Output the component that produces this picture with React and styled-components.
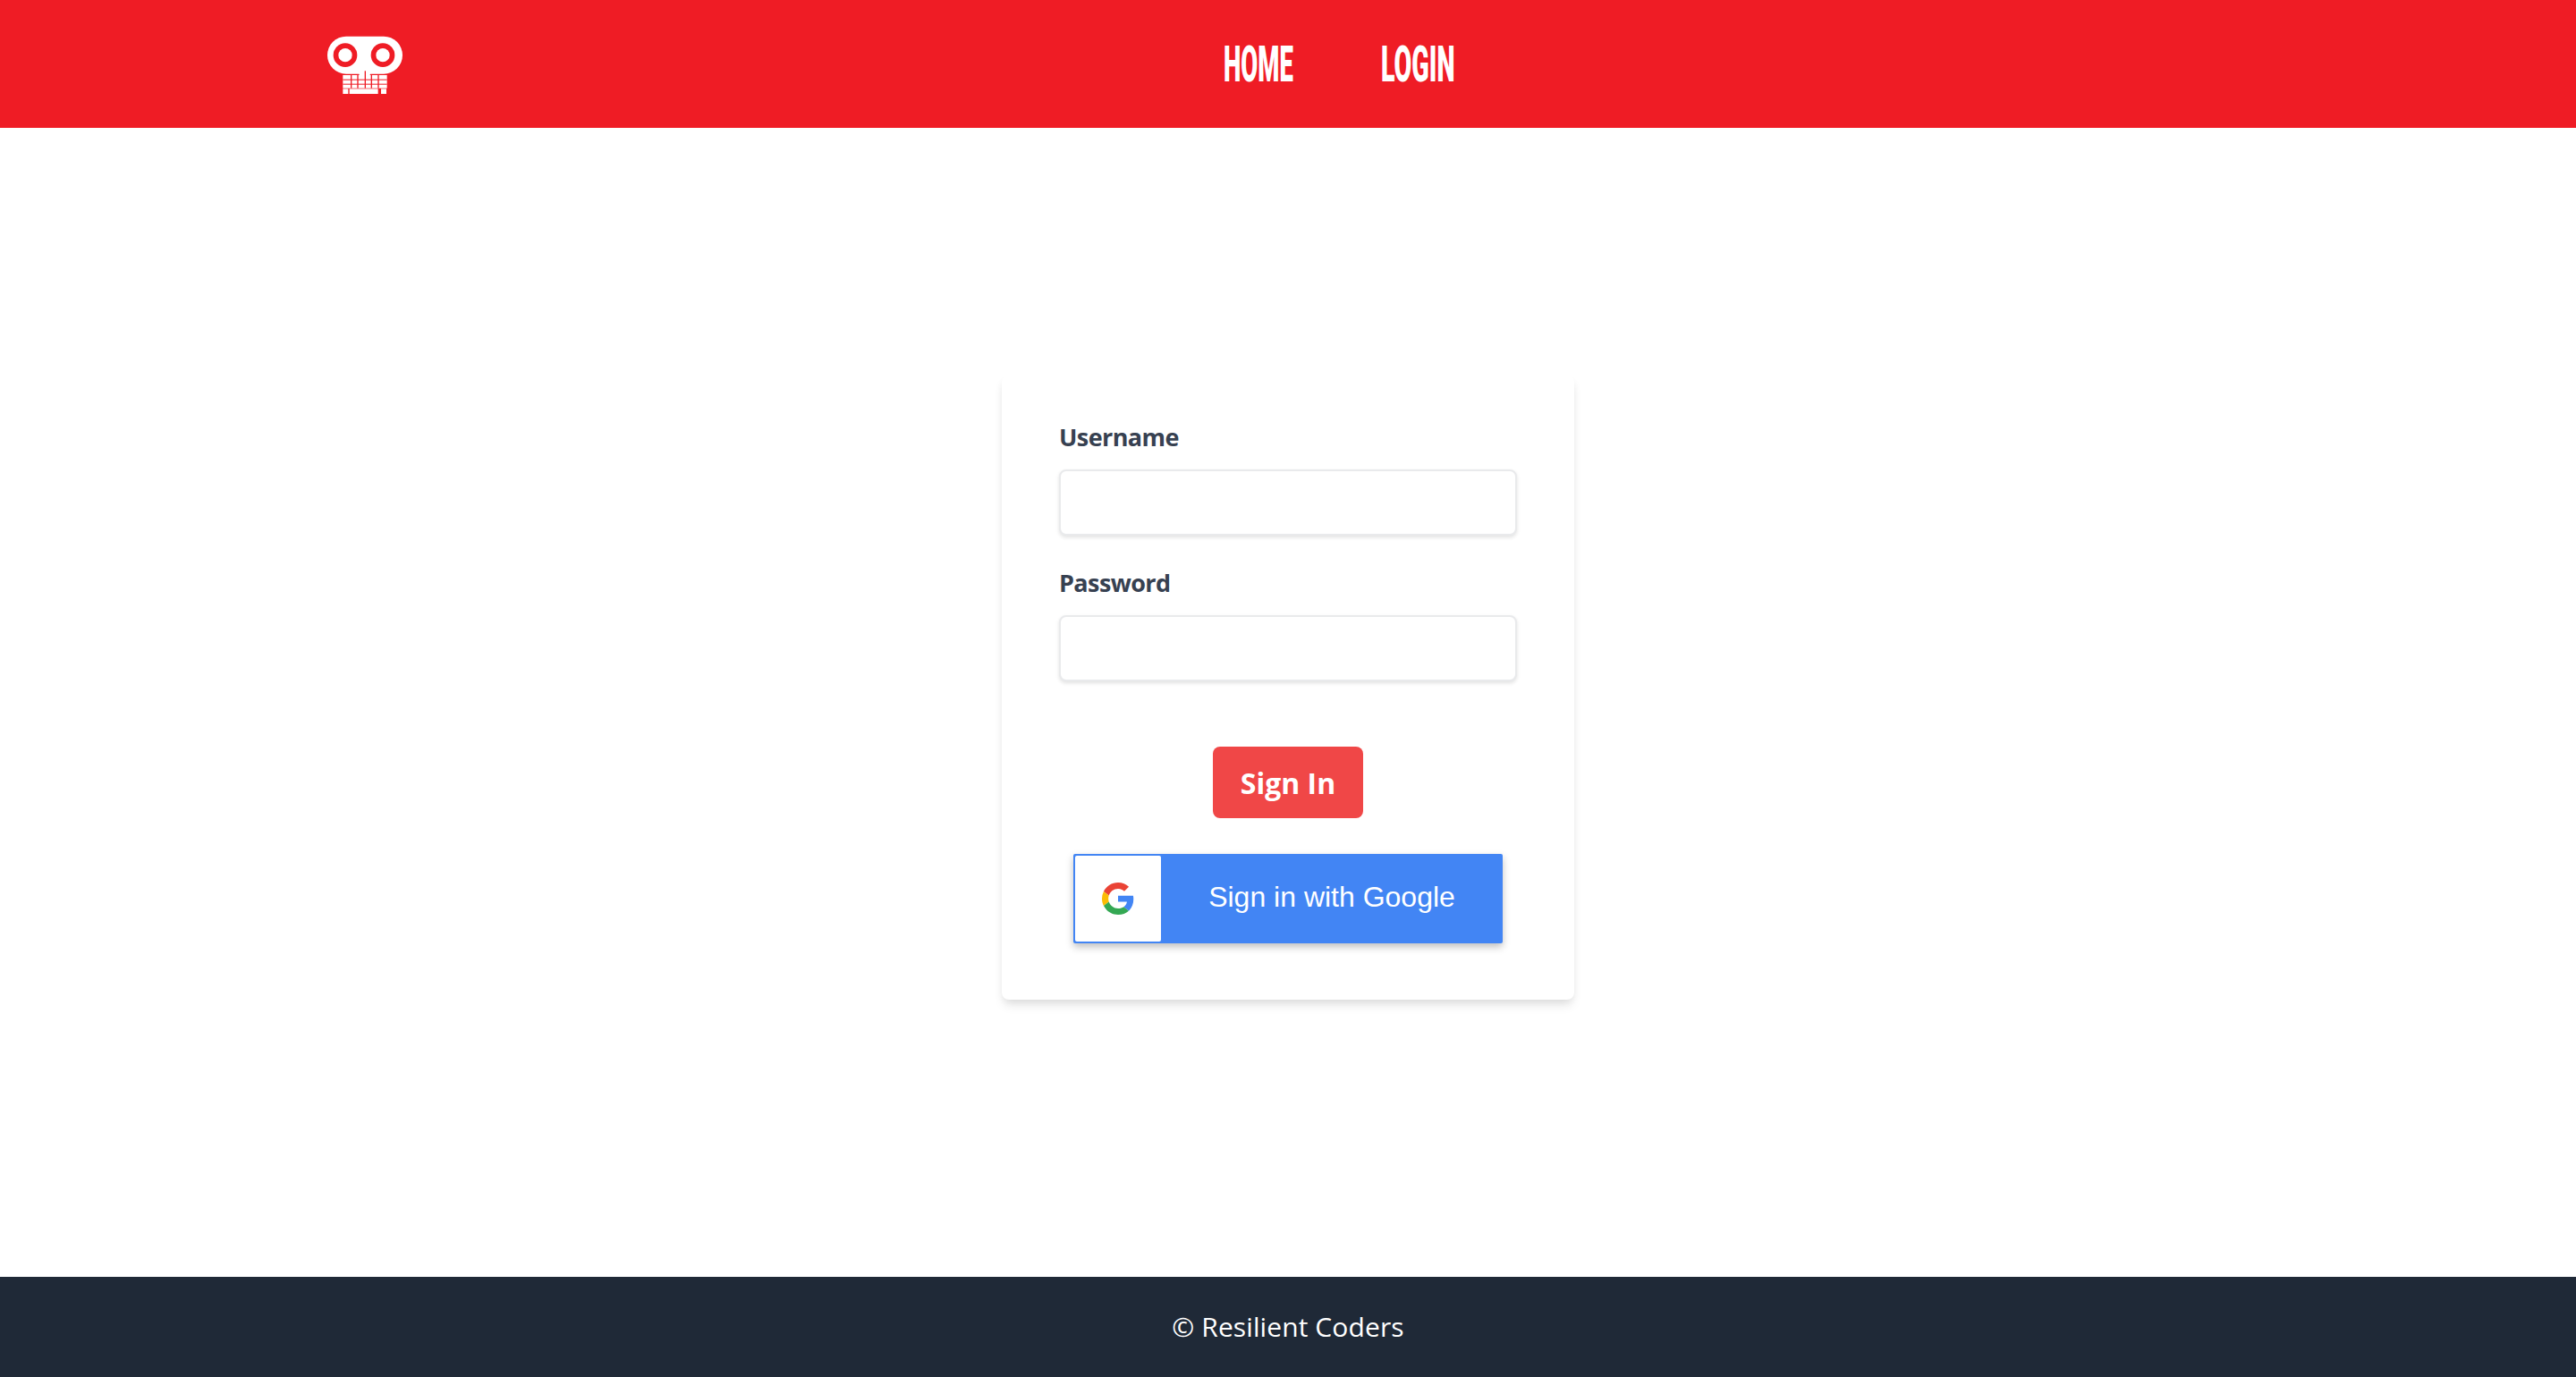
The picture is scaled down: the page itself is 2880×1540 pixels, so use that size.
import React from 'react'
import styled, { createGlobalStyle } from 'styled-components'

const GlobalStyle = createGlobalStyle`
  * { box-sizing: border-box; }
  body { margin: 0; background: #fff; font-family: "Open Sans", "Noto Sans", sans-serif; }
`

const Page = styled.div`
  display: flex;
  flex-direction: column;
  min-height: 1540px;
`
const Header = styled.header`
  display: flex;
  align-items: center;
  height: 143px;
  padding-left: 365px;
  background: #ef1c25;
`
const Logo = styled.svg`
  width: 87px;
  height: 67px;
  margin-top: 3px;
`
const Nav = styled.nav`
  display: flex;
  gap: 96px;
  margin-left: 916px;
`
const NavLink = styled.a`
  display: block;
  width: ${p => p.$w}px;
  height: 56px;
  color: #fff;
  font: 900 55px/56px Roboto, sans-serif;
  white-space: nowrap;
  transform-origin: left center;
  transform: scaleX(${p => p.$scale});
`
const Main = styled.main`
  flex: 1;
  display: flex;
  justify-content: center;
  align-items: flex-start;
  padding-top: 276px;
`
const Card = styled.form`
  display: flex;
  flex-direction: column;
  width: 640px;
  padding: 50px 64px 63px;
  background: #fff;
  border-radius: 8px;
  box-shadow: 0 8px 12px -2px rgba(0, 0, 0, .1), 0 4px 8px -2px rgba(0, 0, 0, .06);
`
const Label = styled.label`
  display: block;
  margin-bottom: 16px;
  color: #374151;
  font-size: 27px;
  font-weight: 700;
  letter-spacing: -0.6px;
  line-height: 40px;
`
const Input = styled.input`
  display: block;
  width: 100%;
  height: 74px;
  margin-bottom: ${p => p.$mb}px;
  border: 2px solid #e9eaec;
  border-radius: 8px;
  background: #fff;
  box-shadow: 0 2px 4px rgba(0, 0, 0, .12);
`
const SubmitButton = styled.button`
  align-self: center;
  width: 168px;
  height: 80px;
  padding: 2px 0 0;
  border: 0;
  border-radius: 8px;
  background: #f04747;
  color: #fff;
  font-family: inherit;
  font-size: 32px;
  font-weight: 700;
  line-height: 48px;
`
const GoogleButton = styled.div`
  display: flex;
  align-self: center;
  width: 480px;
  height: 100px;
  margin-top: 40px;
  padding: 2px;
  background: #4285f4;
  border-radius: 2px;
  box-shadow: 0 4px 8px rgba(0, 0, 0, .25);
  color: #fff;
  font: 400 32px/92px "Liberation Sans", Arial, sans-serif;
`
const GoogleIcon = styled.span`
  display: flex;
  align-items: center;
  justify-content: center;
  width: 96px;
  height: 96px;
  background: #fff;
  border-radius: 2px;
`
const GoogleLabel = styled.span`
  flex: 1;
  padding-left: 2px;
  text-align: center;
`
const Footer = styled.footer`
  display: flex;
  align-items: center;
  justify-content: center;
  height: 112px;
  padding-bottom: 2px;
  background: #1f2937;
  color: #fff;
  font-size: 30px;
  letter-spacing: 0.1px;
`

const RobotLogo = () => (
  <Logo viewBox="75 60 261 201">
    <rect x="78" y="62" width="252" height="126" rx="63" fill="#fff" />
    <circle cx="138" cy="125" r="40" fill="#ef1c25" />
    <circle cx="138" cy="125" r="23" fill="#fff" />
    <circle cx="264" cy="125" r="40" fill="#ef1c25" />
    <circle cx="264" cy="125" r="23" fill="#fff" />
    <g fill="#fff">
      <rect x="184" y="178" width="38" height="14" rx="3" />
      <rect x="130" y="192" width="148" height="44" />
      <rect x="130" y="238" width="18" height="17" />
      <rect x="152" y="238" width="96" height="17" />
      <rect x="258" y="238" width="18" height="17" />
    </g>
    <g fill="#ef1c25">
      <rect x="156" y="192" width="4" height="44" />
      <rect x="178" y="192" width="4" height="44" />
      <rect x="203" y="178" width="4" height="58" />
      <rect x="224" y="192" width="4" height="44" />
      <rect x="247" y="192" width="4" height="44" />
      <rect x="130" y="206" width="148" height="3" />
      <rect x="130" y="221" width="148" height="3" />
    </g>
  </Logo>
)

const GoogleMark = () => (
  <svg width="36" height="36" viewBox="0 0 18 18">
    <path fill="#EA4335" d="M9 3.48c1.69 0 2.83.73 3.48 1.34l2.54-2.48C13.46.89 11.43 0 9 0 5.48 0 2.44 2.02.96 4.96l2.91 2.26C4.6 5.05 6.62 3.48 9 3.48z" />
    <path fill="#4285F4" d="M17.64 9.2c0-.74-.06-1.28-.19-1.84H9v3.34h4.96c-.1.83-.64 2.08-1.84 2.92l2.84 2.2c1.7-1.57 2.68-3.88 2.68-6.62z" />
    <path fill="#FBBC05" d="M3.88 10.78A5.54 5.54 0 0 1 3.58 9c0-.62.11-1.22.29-1.78L.96 4.96A9.008 9.008 0 0 0 0 9c0 1.45.35 2.82.96 4.04l2.92-2.26z" />
    <path fill="#34A853" d="M9 18c2.43 0 4.47-.8 5.96-2.18l-2.84-2.2c-.76.53-1.78.9-3.12.9-2.38 0-4.4-1.57-5.12-3.74L.98 13.04C2.46 15.98 5.48 18 9 18z" />
  </svg>
)

const App = () => {
  return (
    <Page>
      <GlobalStyle />
      <Header>
        <RobotLogo />
        <Nav>
          <NavLink $w={80} $scale={0.5}>HOME</NavLink>
          <NavLink $w={80} $scale={0.52}>LOGIN</NavLink>
        </Nav>
      </Header>
      <Main>
        <Card>
          <Label htmlFor="username">Username</Label>
          <Input id="username" type="text" $mb={33} />
          <Label htmlFor="password">Password</Label>
          <Input id="password" type="password" $mb={73} />
          <SubmitButton type="button">Sign In</SubmitButton>
          <GoogleButton>
            <GoogleIcon><GoogleMark /></GoogleIcon>
            <GoogleLabel>Sign in with Google</GoogleLabel>
          </GoogleButton>
        </Card>
      </Main>
      <Footer>© Resilient Coders</Footer>
    </Page>
  )
}

export default App
